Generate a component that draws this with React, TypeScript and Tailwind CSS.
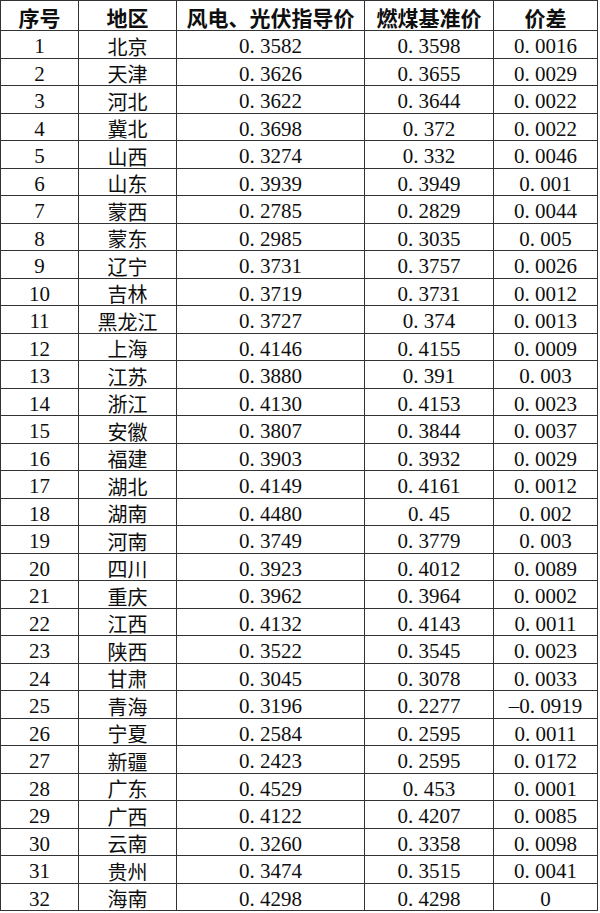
import React from 'react';

type Row = [string, string, string, string, string];

const ROWS: Row[] = [
  ['1', '北京', '0.3582', '0.3598', '0.0016'],
  ['2', '天津', '0.3626', '0.3655', '0.0029'],
  ['3', '河北', '0.3622', '0.3644', '0.0022'],
  ['4', '冀北', '0.3698', '0.372', '0.0022'],
  ['5', '山西', '0.3274', '0.332', '0.0046'],
  ['6', '山东', '0.3939', '0.3949', '0.001'],
  ['7', '蒙西', '0.2785', '0.2829', '0.0044'],
  ['8', '蒙东', '0.2985', '0.3035', '0.005'],
  ['9', '辽宁', '0.3731', '0.3757', '0.0026'],
  ['10', '吉林', '0.3719', '0.3731', '0.0012'],
  ['11', '黑龙江', '0.3727', '0.374', '0.0013'],
  ['12', '上海', '0.4146', '0.4155', '0.0009'],
  ['13', '江苏', '0.3880', '0.391', '0.003'],
  ['14', '浙江', '0.4130', '0.4153', '0.0023'],
  ['15', '安徽', '0.3807', '0.3844', '0.0037'],
  ['16', '福建', '0.3903', '0.3932', '0.0029'],
  ['17', '湖北', '0.4149', '0.4161', '0.0012'],
  ['18', '湖南', '0.4480', '0.45', '0.002'],
  ['19', '河南', '0.3749', '0.3779', '0.003'],
  ['20', '四川', '0.3923', '0.4012', '0.0089'],
  ['21', '重庆', '0.3962', '0.3964', '0.0002'],
  ['22', '江西', '0.4132', '0.4143', '0.0011'],
  ['23', '陕西', '0.3522', '0.3545', '0.0023'],
  ['24', '甘肃', '0.3045', '0.3078', '0.0033'],
  ['25', '青海', '0.3196', '0.2277', '-0.0919'],
  ['26', '宁夏', '0.2584', '0.2595', '0.0011'],
  ['27', '新疆', '0.2423', '0.2595', '0.0172'],
  ['28', '广东', '0.4529', '0.453', '0.0001'],
  ['29', '广西', '0.4122', '0.4207', '0.0085'],
  ['30', '云南', '0.3260', '0.3358', '0.0098'],
  ['31', '贵州', '0.3474', '0.3515', '0.0041'],
  ['32', '海南', '0.4298', '0.4298', '0'],
];

const HEADERS = ['序号', '地区', '风电、光伏指导价', '燃煤基准价', '价差'];

const serif = "font-['Liberation_Serif',serif]";
const cjk = "font-['Noto_Sans_CJK_SC',sans-serif]";

// half-width cells like SimSun: period and minus take a full digit slot
function Num({ value }: { value: string }) {
  return (
    <span className={`${serif} text-[21px] leading-none`}>
      {value.split('').map((ch, i) =>
        ch === '.' ? (
          <span key={i} className="inline-block w-[10.5px] text-left">
            .
          </span>
        ) : ch === '-' ? (
          <span key={i} className="inline-block w-[10.5px] text-center">
            –
          </span>
        ) : (
          <span key={i}>{ch}</span>
        )
      )}
    </span>
  );
}

export default function App() {
  return (
    <div className="w-[600px] h-[913px] bg-white">
      <div className="w-[598px] bg-[#333333] p-px">
        <div className="grid grid-cols-[77px_97px_187px_128px_103px] grid-rows-[29px_repeat(32,26.5px)] gap-px text-[#0f0f0f]">
          {HEADERS.map((h) => (
            <div key={h} className={`flex items-center justify-center bg-white pt-[3px] ${cjk} text-[21px] font-bold leading-none`}>
              {h}
            </div>
          ))}
          {ROWS.map((r) => (
            <React.Fragment key={r[0]}>
              <div className="flex items-center justify-center bg-white pt-[5px]">
                <Num value={r[0]} />
              </div>
              <div className={`flex items-center justify-center bg-white pt-[5px] ${cjk} text-[20px] leading-none`}>
                {r[1]}
              </div>
              <div className="flex items-center justify-center bg-white pt-[5px]">
                <Num value={r[2]} />
              </div>
              <div className="flex items-center justify-center bg-white pt-[5px]">
                <Num value={r[3]} />
              </div>
              <div className="flex items-center justify-center bg-white pt-[5px]">
                <Num value={r[4]} />
              </div>
            </React.Fragment>
          ))}
        </div>
      </div>
    </div>
  );
}
